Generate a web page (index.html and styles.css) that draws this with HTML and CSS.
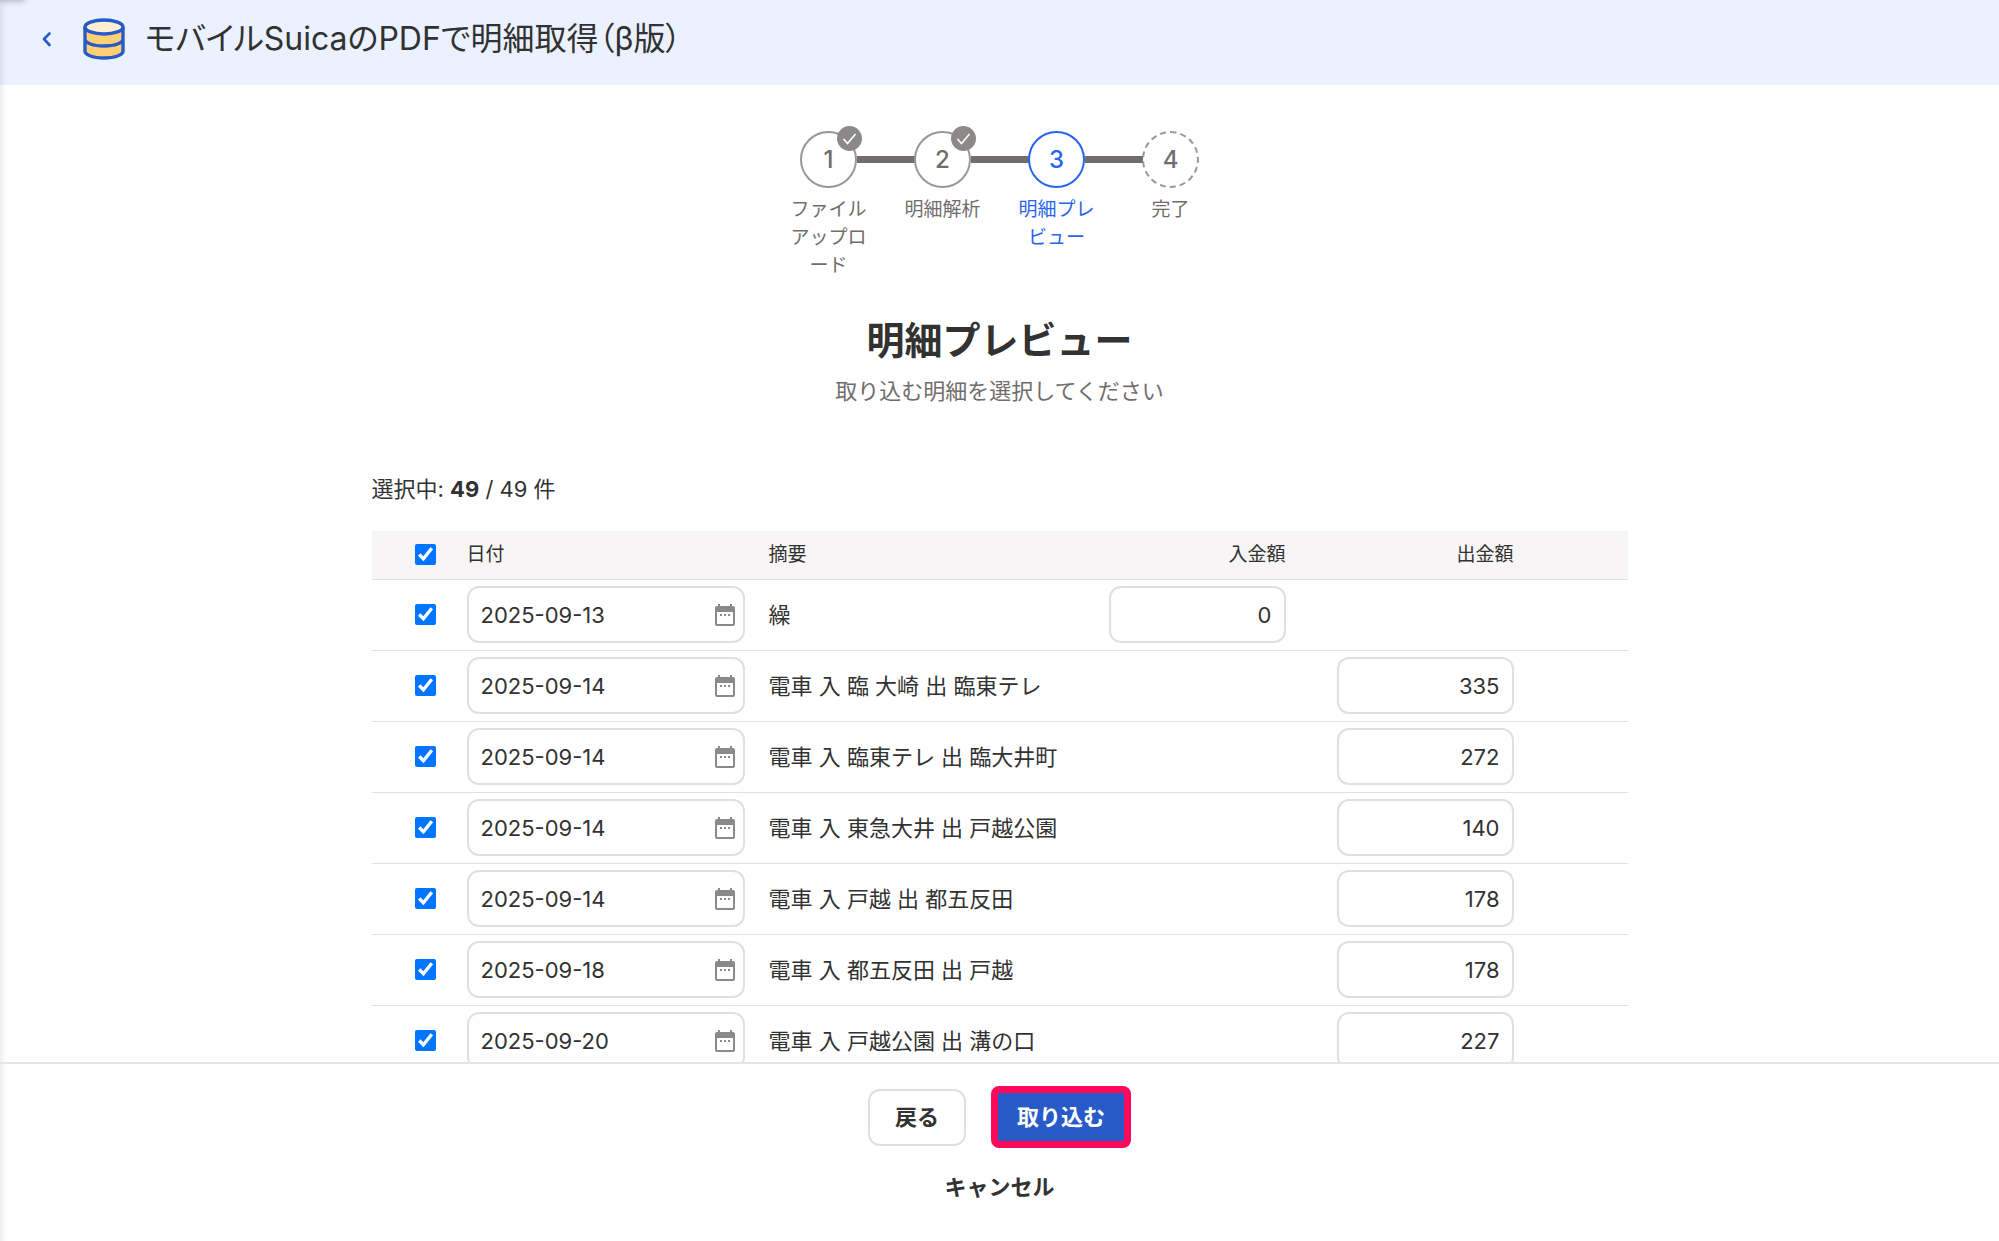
FILE: index.html
```html
<!DOCTYPE html>
<html lang="ja">
  <head>
    <meta charset="utf-8">
    <title>モバイルSuicaのPDFで明細取得（β版）</title>
    <link rel="stylesheet" href="styles.css">
  </head>
  <body>
    <svg class="sprite" aria-hidden="true">
      <symbol id="icon-calendar" viewBox="0 0 20 22">
        <path fill="currentColor" fill-rule="evenodd" d="M3 0h2v2h10V0h2v2h1a2 2 0 0 1 2 2v16a2 2 0 0 1-2 2H2a2 2 0 0 1-2-2V4a2 2 0 0 1 2-2h1zM2 8v12h16V8zM5 10h2v2H5zM9 10h2v2H9zM13 10h2v2h-2z"/>
      </symbol>
      <symbol id="icon-check" viewBox="0 0 25 25">
        <path fill="none" stroke="#fff" stroke-width="1.6" d="M6.500 13l4 4.500 8-9.500"/>
      </symbol>
    </svg>

    <header class="header">
      <a class="back-link" href="#" aria-label="戻る">
        <svg width="10" height="16" viewBox="0 0 10 16"><path d="M7.500 2.500L2 8l5.500 6" fill="none" stroke="#285ac8" stroke-width="2.600" stroke-linecap="round" stroke-linejoin="round"/></svg>
      </a>
      <svg class="db-icon" width="42" height="42" viewBox="0 0 42 42">
        <path d="M2 9v24c0 4 8 7 19 7s19-3 19-7V9z" fill="#ffd073"/>
        <ellipse cx="21" cy="9" rx="19" ry="7" fill="#fff0d2"/>
        <g fill="none" stroke="#285ac8" stroke-width="3.400">
          <ellipse cx="21" cy="9" rx="19" ry="7"/>
          <path d="M2 9v24c0 4 8 7 19 7s19-3 19-7V9M2 21c0 4 8 7 19 7s19-3 19-7"/>
        </g>
      </svg>
      <h1 class="page-title">モバイルSuicaのPDFで明細取得（β版）</h1>
    </header>

    <main class="main">
      <ol class="steps">
        <li class="step">
          <span class="circle">1<svg class="badge"><use href="#icon-check"/></svg></span>
          <span class="step-label">ファイルアップロード</span>
        </li>
        <li class="step">
          <span class="circle">2<svg class="badge"><use href="#icon-check"/></svg></span>
          <span class="step-label">明細解析</span>
        </li>
        <li class="step current">
          <span class="circle">3</span>
          <span class="step-label">明細プレビュー</span>
        </li>
        <li class="step todo">
          <span class="circle">4</span>
          <span class="step-label">完了</span>
        </li>
      </ol>

      <h2 class="heading">明細プレビュー</h2>
      <p class="lead">取り込む明細を選択してください</p>

      <div class="content">
        <p class="count">選択中: <b>49</b> / 49 件</p>
        <table class="list">
          <colgroup>
            <col class="col-check"><col class="col-date"><col><col class="col-amount"><col class="col-amount"><col class="col-end">
          </colgroup>
          <thead>
            <tr>
              <th class="check"><input type="checkbox" aria-label="すべて選択" checked></th>
              <th>日付</th>
              <th>摘要</th>
              <th class="right">入金額</th>
              <th class="right">出金額</th>
              <th></th>
            </tr>
          </thead>
          <tbody id="rows"></tbody>
        </table>
      </div>
    </main>

    <footer class="footer">
      <div class="buttons">
        <button class="btn" type="button">戻る</button>
        <button class="btn primary" type="button">取り込む</button>
      </div>
      <button class="cancel" type="button">キャンセル</button>
    </footer>

    <script src="script.js"></script>
  </body>
</html>
```

FILE: styles.css
```css
* {
  box-sizing: border-box;
}
body {
  margin: 0;
  height: 100vh;
  display: flex;
  flex-direction: column;
  font-family: Inter, "Noto Sans CJK JP", sans-serif;
  font-size: 22px;
  line-height: 32px;
  color: #323232;
  background-color: #fff;
  box-shadow: inset 8px 0 8px -8px rgba(0, 0, 0, 0.14);
}
h1, h2, p, ol {
  margin: 0;
  padding: 0;
}
button, input {
  font: inherit;
  color: inherit;
}
.sprite {
  position: absolute;
  width: 0;
  height: 0;
}

/* Header */
.header {
  position: relative;
  overflow: hidden;
  flex: none;
  display: flex;
  align-items: center;
  height: 85px;
  padding: 0 42px 8px;
  background-color: #ebf1ff;
  box-shadow: inset 8px 0 8px -8px rgba(0, 0, 0, 0.14);
}
/* shadow of the side menu corner */
.header::before {
  content: "";
  position: absolute;
  top: -4px;
  left: 0;
  width: 24px;
  height: 4px;
  box-shadow: 0 0 6px 1px rgba(0, 0, 0, 0.3);
}
.back-link {
  display: flex;
}
.db-icon {
  margin: 0 20px 0 31px;
}
.page-title {
  font-size: 32px;
  font-weight: 400;
  font-feature-settings: "palt";
}

/* Main area */
.main {
  flex: 1;
  min-height: 0;
  overflow: hidden;
  padding: 46px 24px 0;
}

/* Steps */
.steps {
  display: flex;
  justify-content: center;
  list-style: none;
  color: #706d6c;
}
.step {
  position: relative;
  width: 114px;
  display: flex;
  flex-direction: column;
  align-items: center;
  gap: 8px;
}
.step + .step::before {
  content: "";
  position: absolute;
  top: 25px;
  right: 85px;
  width: 58px;
  height: 7px;
  background-color: #706d6c;
}
.circle {
  position: relative;
  display: flex;
  align-items: center;
  justify-content: center;
  width: 57px;
  height: 57px;
  border: 2px solid #9a9797;
  border-radius: 50%;
  font-size: 24px;
  font-weight: 500;
}
.badge {
  position: absolute;
  top: -7px;
  right: -7px;
  width: 25px;
  height: 25px;
  border-radius: 50%;
  background-color: #8c8989;
}
.step-label {
  width: 78px;
  font-size: 19px;
  line-height: 28px;
  text-align: center;
  line-break: anywhere;
}
.current,
.current .circle {
  color: #2864f0;
  border-color: #2864f0;
}
.todo .circle {
  border-style: dashed;
}

.heading {
  margin-top: 32px;
  font-size: 38px;
  line-height: 56px;
  text-align: center;
}
.lead {
  margin-top: 7px;
  text-align: center;
  color: #706d6c;
}

/* List */
.content {
  max-width: 1256px;
  margin: 66px auto 0;
}
.list {
  width: 100%;
  margin-top: 26px;
  table-layout: fixed;
  border-collapse: collapse;
}
.col-check {
  width: 83px;
}
.col-date {
  width: 302px;
}
.col-amount {
  width: 228px;
}
.col-end {
  width: 102px;
}
.list th,
.list td {
  padding: 0 12px;
  border-bottom: 1px solid #e1dfdf;
  text-align: left;
  white-space: nowrap;
}
.list th {
  height: 48px;
  font-size: 19px;
  font-weight: 400;
  background-color: #f7f5f5;
}
.list td {
  height: 71px;
}
.list .right {
  text-align: right;
}
.list .check {
  padding: 0 19px 0 0;
  text-align: right;
}
.check input {
  display: block;
  width: 21px;
  height: 21px;
  margin: 0 0 0 auto;
}
.date,
.amount {
  height: 57px;
  border: 2px solid #e1dfdf;
  border-radius: 12px;
  background-color: #fff;
}
.date {
  display: flex;
  align-items: center;
  padding: 0 8px 0 12px;
}
.date input {
  flex: 1;
  min-width: 0;
  padding: 0;
  border: 0;
  outline: 0;
}
.date button {
  display: flex;
  padding: 0;
  border: 0;
  background: none;
  color: #8c8989;
  cursor: pointer;
}
.date svg {
  width: 20px;
  height: 22px;
}
.amount {
  width: 177px;
  padding: 0 12px;
  text-align: right;
}

/* Footer */
.footer {
  flex: none;
  display: flex;
  flex-direction: column;
  align-items: center;
  gap: 23px;
  height: 179px;
  padding-top: 22px;
  border-top: 2px solid #e1e6e6;
}
.buttons {
  display: flex;
  align-items: center;
  gap: 25px;
}
.btn {
  height: 57px;
  padding: 0 25px;
  border: 2px solid #e1dfdf;
  border-radius: 12px;
  background-color: #fff;
  font-weight: 700;
  cursor: pointer;
}
.primary {
  height: 62px;
  padding: 0 19px;
  border: 7px solid #ff0a5a;
  border-radius: 8px;
  background-color: #285ac8;
  color: #fff;
}
.cancel {
  padding: 0;
  border: 0;
  background: none;
  font-weight: 700;
  cursor: pointer;
}
```

FILE: script.js
```js
const rows = [
  { date: '2025-09-13', text: '繰', deposit: 0 },
  { date: '2025-09-14', text: '電車 入 臨 大崎 出 臨東テレ', withdrawal: 335 },
  { date: '2025-09-14', text: '電車 入 臨東テレ 出 臨大井町', withdrawal: 272 },
  { date: '2025-09-14', text: '電車 入 東急大井 出 戸越公園', withdrawal: 140 },
  { date: '2025-09-14', text: '電車 入 戸越 出 都五反田', withdrawal: 178 },
  { date: '2025-09-18', text: '電車 入 都五反田 出 戸越', withdrawal: 178 },
  { date: '2025-09-20', text: '電車 入 戸越公園 出 溝の口', withdrawal: 227 },
];

function amount(value, label) {
  if (value === undefined) return '';
  return `<input class="amount" type="text" inputmode="numeric" aria-label="${label}" value="${value}">`;
}

document.getElementById('rows').innerHTML = rows.map(row => `
  <tr>
    <td class="check"><input type="checkbox" aria-label="選択" checked></td>
    <td>
      <div class="date">
        <input type="text" aria-label="日付" value="${row.date}">
        <button type="button" aria-label="カレンダー"><svg><use href="#icon-calendar"/></svg></button>
      </div>
    </td>
    <td>${row.text}</td>
    <td class="right">${amount(row.deposit, '入金額')}</td>
    <td class="right">${amount(row.withdrawal, '出金額')}</td>
    <td></td>
  </tr>`).join('');
```
